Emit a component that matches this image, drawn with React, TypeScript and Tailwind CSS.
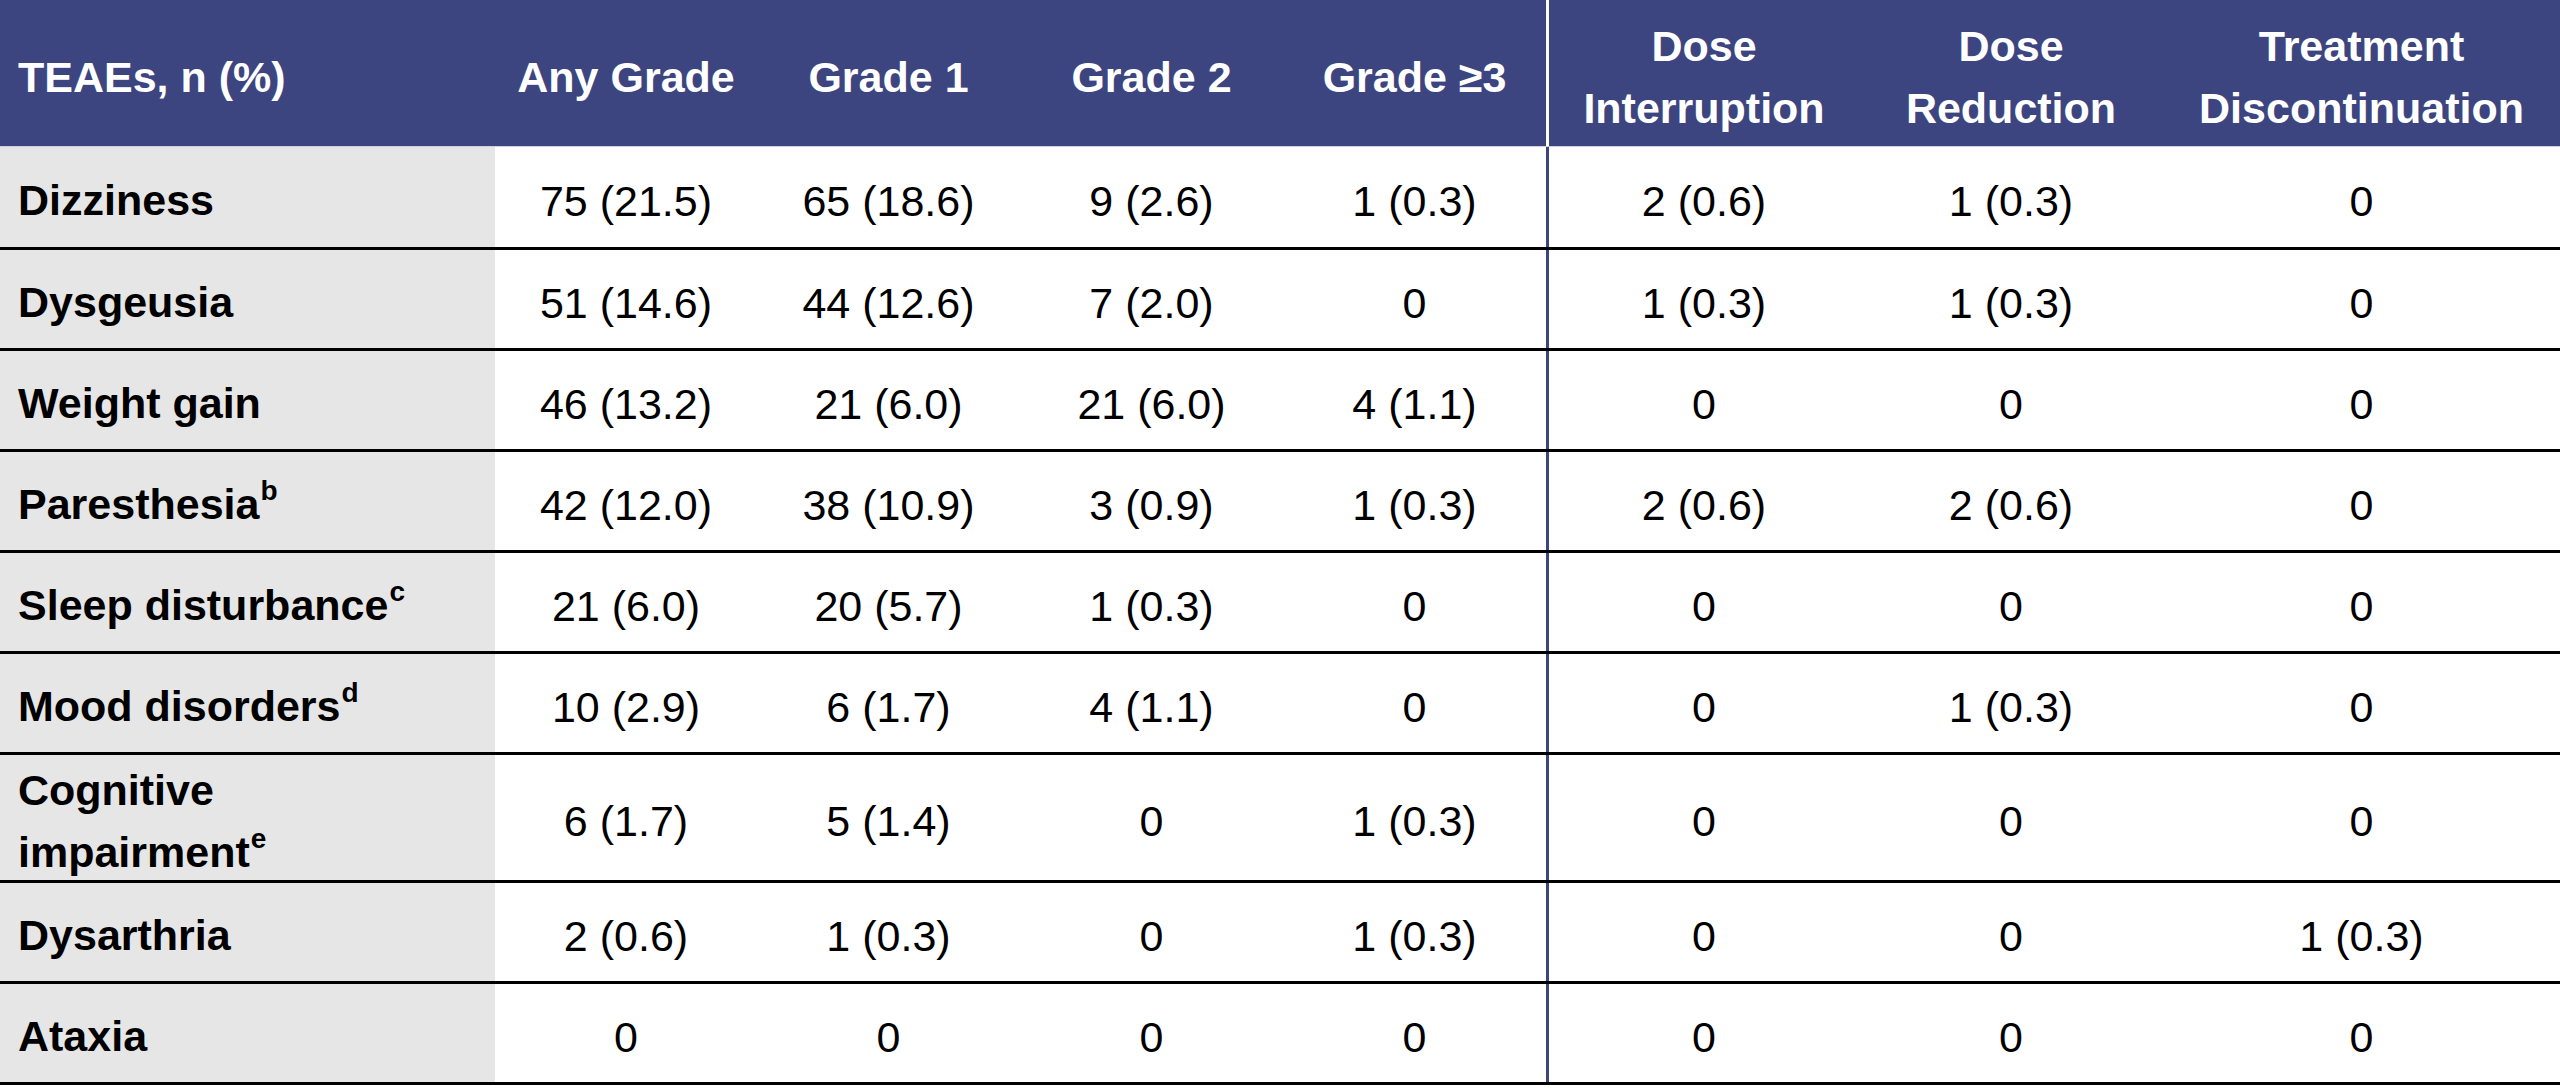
import React from "react";

type Row = { label: string[]; sup?: string; vals: string[]; h: string };

const rows: Row[] = [
  { label: ["Dizziness"], vals: ["75 (21.5)", "65 (18.6)", "9 (2.6)", "1 (0.3)", "2 (0.6)", "1 (0.3)", "0"], h: "h-[103px]" },
  { label: ["Dysgeusia"], vals: ["51 (14.6)", "44 (12.6)", "7 (2.0)", "0", "1 (0.3)", "1 (0.3)", "0"], h: "h-[101px]" },
  { label: ["Weight gain"], vals: ["46 (13.2)", "21 (6.0)", "21 (6.0)", "4 (1.1)", "0", "0", "0"], h: "h-[101px]" },
  { label: ["Paresthesia"], sup: "b", vals: ["42 (12.0)", "38 (10.9)", "3 (0.9)", "1 (0.3)", "2 (0.6)", "2 (0.6)", "0"], h: "h-[101px]" },
  { label: ["Sleep disturbance"], sup: "c", vals: ["21 (6.0)", "20 (5.7)", "1 (0.3)", "0", "0", "0", "0"], h: "h-[101px]" },
  { label: ["Mood disorders"], sup: "d", vals: ["10 (2.9)", "6 (1.7)", "4 (1.1)", "0", "0", "1 (0.3)", "0"], h: "h-[101px]" },
  { label: ["Cognitive", "impairment"], sup: "e", vals: ["6 (1.7)", "5 (1.4)", "0", "1 (0.3)", "0", "0", "0"], h: "h-[128px]" },
  { label: ["Dysarthria"], vals: ["2 (0.6)", "1 (0.3)", "0", "1 (0.3)", "0", "0", "1 (0.3)"], h: "h-[101px]" },
  { label: ["Ataxia"], vals: ["0", "0", "0", "0", "0", "0", "0"], h: "h-[101px]" },
];

const cols = "grid grid-cols-[495px_262px_263px_263px_263px_313px_304px_1fr]";

function Label({ r }: { r: Row }) {
  return (
    <div className="flex flex-col justify-center translate-y-[3px]">
      {r.label.map((t, k) => (
        <span key={k} className="block whitespace-nowrap">
          {t}
          {k === r.label.length - 1 && r.sup ? (
            <span className="inline-block align-top text-[28px] leading-[28px] mt-[4px] ml-[1px]">{r.sup}</span>
          ) : null}
        </span>
      ))}
    </div>
  );
}

export default function App() {
  return (
    <div className="w-[2560px] h-[1089px] bg-white font-['Liberation_Sans',Arial,sans-serif] text-[43px] leading-[62px] text-black overflow-hidden">
      {/* Header */}
      <div className={`${cols} h-[147px] bg-[#3d4580] text-white font-bold border-b border-[#cfd1de]`}>
        <div className="flex items-center pl-[18px] pt-[8px]">TEAEs, n (%)</div>
        <div className="flex items-center justify-center text-center pt-[8px]">Any Grade</div>
        <div className="flex items-center justify-center text-center pt-[8px]">Grade 1</div>
        <div className="flex items-center justify-center text-center pt-[8px]">Grade 2</div>
        <div className="flex items-center justify-center text-center pt-[8px]">Grade ≥3</div>
        <div className="flex flex-col items-center justify-center text-center pt-[8px] border-l-[3px] border-white">
          <span>Dose</span>
          <span>Interruption</span>
        </div>
        <div className="flex flex-col items-center justify-center text-center pt-[8px]">
          <span>Dose</span>
          <span>Reduction</span>
        </div>
        <div className="flex flex-col items-center justify-center text-center pt-[8px]">
          <span>Treatment</span>
          <span>Discontinuation</span>
        </div>
      </div>

      {/* Body */}
      <div className="bg-[linear-gradient(to_right,#e6e6e6_0px,#e6e6e6_495px,#ffffff_495px)]">
        {rows.map((r, i) => (
          <div key={i} className={`${cols} ${r.h} border-b-[3px] border-black`}>
            <div className="flex items-center pl-[18px] bg-[#e6e6e6] font-bold">
              <Label r={r} />
            </div>
            {r.vals.map((v, j) => (
              <div
                key={j}
                className={`flex items-center justify-center pt-[7px] ${j === 4 ? "border-l-[3px] border-[#3d4580]" : ""}`}
              >
                {v}
              </div>
            ))}
          </div>
        ))}
      </div>
    </div>
  );
}
